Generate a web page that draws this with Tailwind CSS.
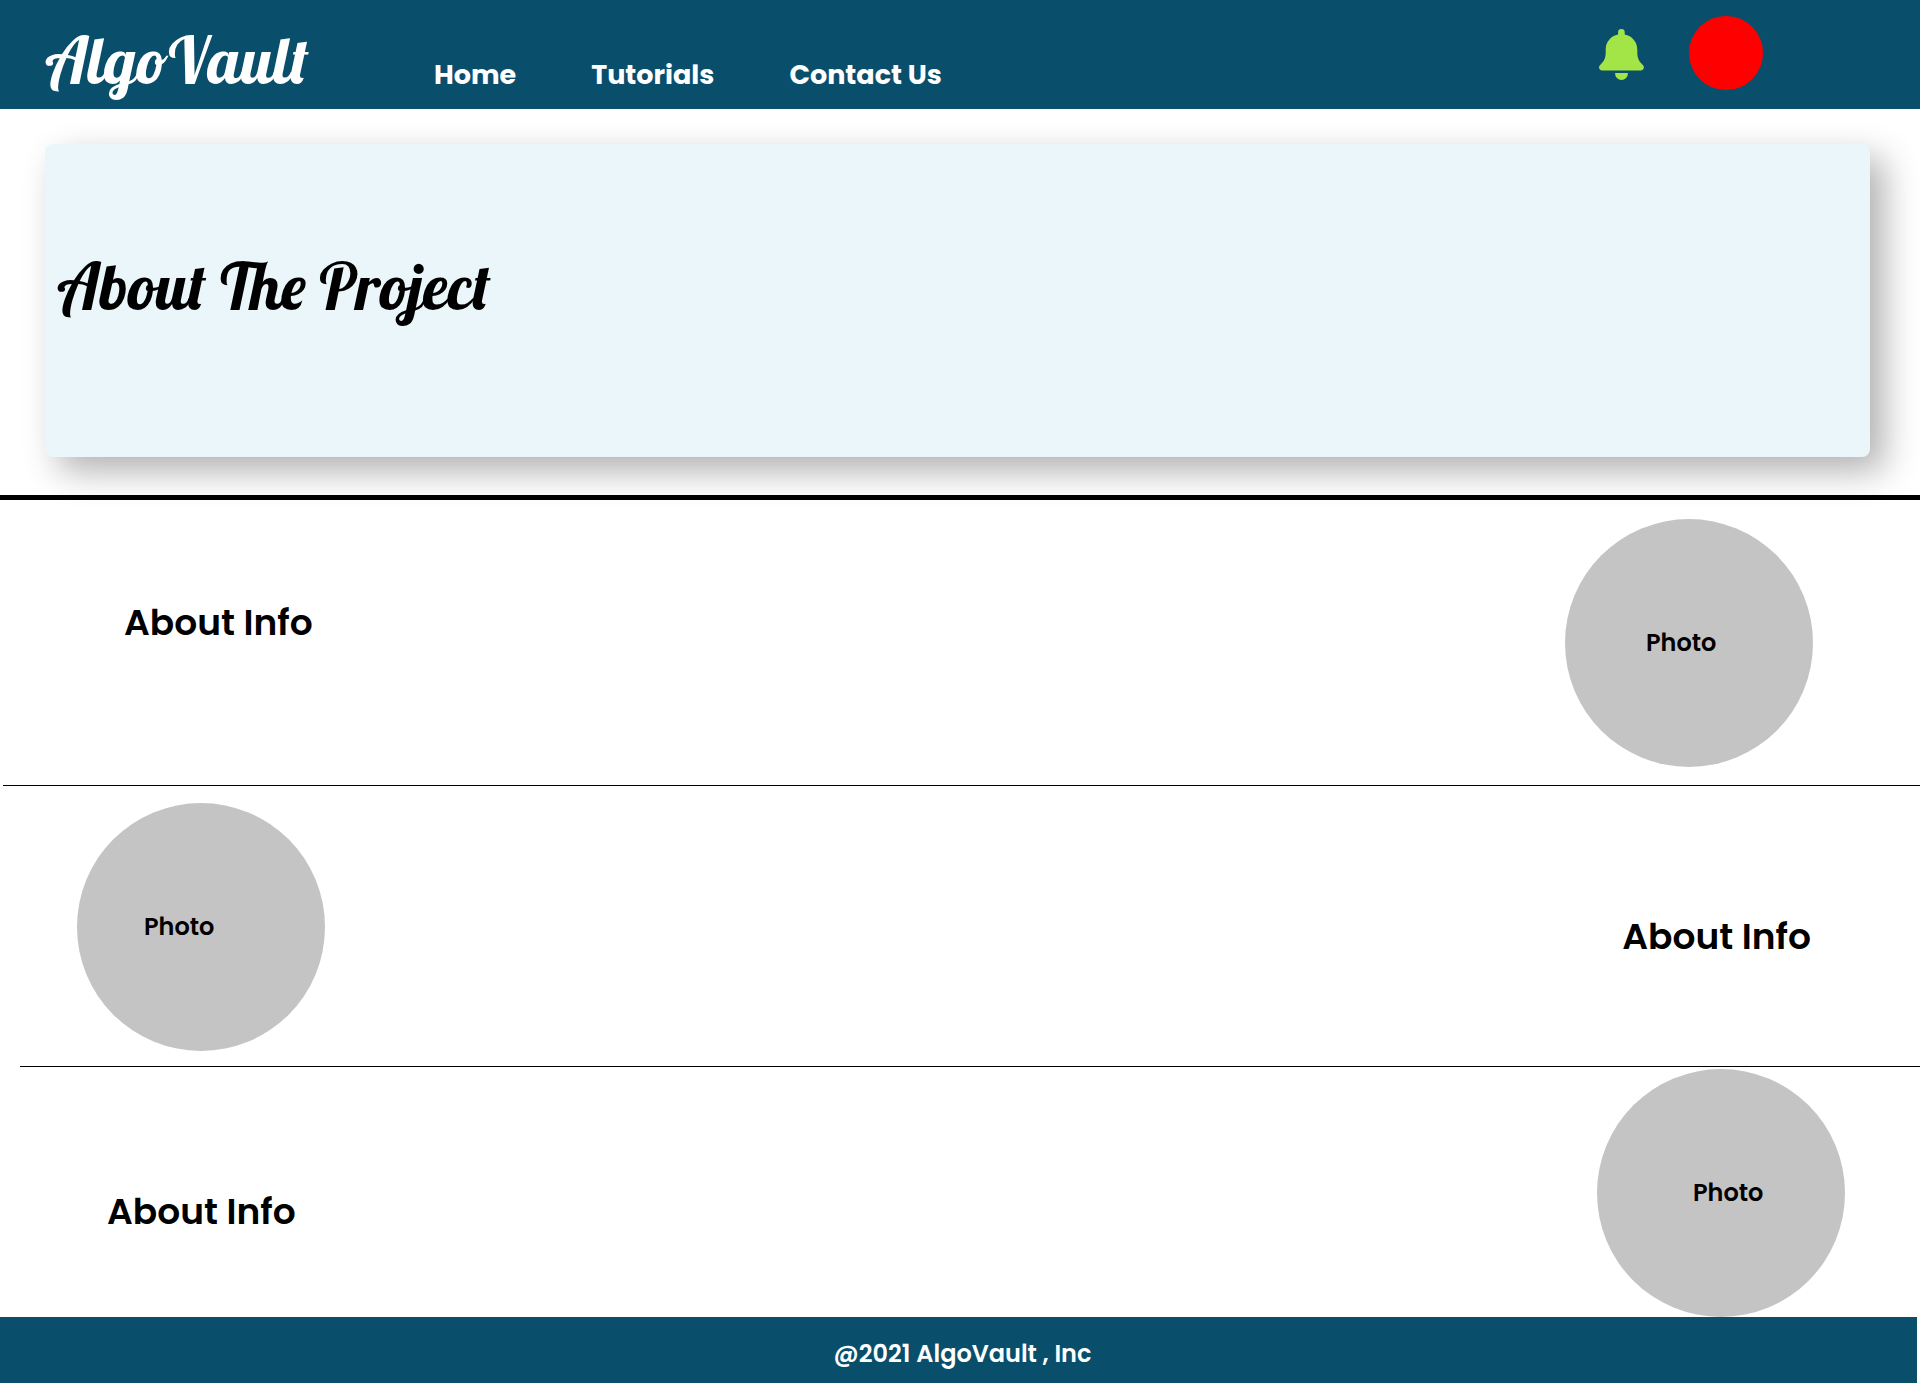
<!DOCTYPE html>
<html lang="en">
<head>
<meta charset="utf-8">
<meta name="viewport" content="width=device-width, initial-scale=1">
<title>AlgoVault - About The Project</title>
<script src="https://cdn.jsdelivr.net/npm/@tailwindcss/browser@4"></script>
</head>
<body class="bg-white font-[Poppins,Inter,sans-serif] text-black">
<header class="flex h-[109px] items-start justify-between bg-[#094f6b] pl-[45px] pr-[157px] text-white">
  <div class="flex items-baseline pt-5">
    <a href="#" class="w-[389px] font-[Lobster,'Liberation_Serif',serif] text-[64px] leading-[80px] font-normal">AlgoVault</a>
    <nav class="flex gap-[75px] text-[27px] leading-10 font-bold">
      <a href="#">Home</a>
      <a href="#">Tutorials</a>
      <a href="#">Contact Us</a>
    </nav>
  </div>
  <div class="flex items-start gap-[45px] pt-4">
    <button type="button" aria-label="Notifications" class="mt-[13px] text-[#a3e547]">
      <svg class="block h-[51px] w-[45px]" viewBox="0 0 45 51" fill="currentColor" aria-hidden="true">
        <path d="M22.4 0a3.3 3.3 0 0 0-3.3 3.3v2.3C12 7 6.700 13 6.700 20.500v3c0 5.500-1.700 9-5.500 12.400A3.200 3.200 0 0 0 0 38.300c0 1.800 1.400 3.200 3.200 3.200h38.500c1.800 0 3.200-1.400 3.200-3.200 0-.9-.4-1.800-1.100-2.400-3.800-3.400-5.500-6.900-5.500-12.400v-3c0-7.500-5.400-13.500-12.600-14.900V3.300A3.300 3.300 0 0 0 22.400 0z"/>
        <path d="M16 44h13a6.500 7 0 0 1-13 0z"/>
      </svg>
    </button>
    <button type="button" aria-label="Profile" class="size-[74px] rounded-full bg-[#ff0000]"></button>
  </div>
</header>

<main>
  <section class="border-b-[5px] border-black pt-[35px] pr-[50px] pb-[38px] pl-[45px]">
    <div class="flex h-[313px] items-center rounded-lg bg-[#eaf6fa] px-3 pb-[30px] shadow-[14px_14px_35px_rgba(0,0,0,0.31)]">
      <h1 class="font-[Lobster,'Liberation_Serif',serif] text-[64px] leading-[80px] font-normal">About The Project</h1>
    </div>
  </section>

  <section class="flex items-start justify-between pt-[19px] pr-[107px] pb-[18px] pl-[124px]">
    <h2 class="mt-[84px] text-4xl leading-10 font-semibold">About Info</h2>
    <div class="flex size-[248px] items-center rounded-full bg-[#c4c4c4] pl-[81px] text-2xl font-semibold">Photo</div>
  </section>
  <hr class="ml-[3px] border-black">

  <section class="flex items-start justify-between pt-[17px] pr-[109px] pb-[15px] pl-[77px]">
    <div class="flex size-[248px] items-center rounded-full bg-[#c4c4c4] pl-[67px] text-2xl font-semibold">Photo</div>
    <h2 class="mt-[114px] text-4xl leading-10 font-semibold">About Info</h2>
  </section>
  <hr class="ml-5 border-black">

  <section class="flex items-start justify-between pt-0.5 pr-[75px] pl-[107px]">
    <h2 class="mt-[123px] text-4xl leading-10 font-semibold">About Info</h2>
    <div class="flex size-[248px] items-center rounded-full bg-[#c4c4c4] pl-24 text-2xl font-semibold">Photo</div>
  </section>
</main>

<footer class="mr-[3px] flex h-[66px] items-center justify-center bg-[#094f6b] pt-2 pl-2 text-2xl font-semibold text-white">
  <p>@2021 AlgoVault , Inc</p>
</footer>
</body>
</html>
